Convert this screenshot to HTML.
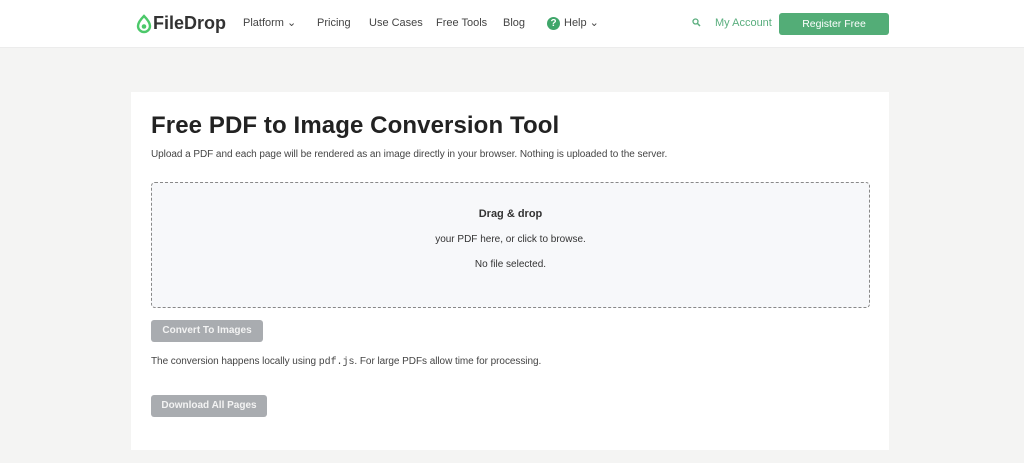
<!DOCTYPE html>
<html><head><meta charset="utf-8"><style>
*{box-sizing:border-box;margin:0;padding:0}
body{width:1024px;height:463px;overflow:hidden;background:#f4f4f3;font-family:"Liberation Sans",sans-serif;position:relative}
.hdr{position:absolute;left:0;top:0;width:1024px;height:48px;background:#fff;border-bottom:1px solid #ececec}
.nav{position:absolute;top:17px;font-size:11px;line-height:13px;color:#444}
.card{position:absolute;left:131px;top:92px;width:758px;height:358px;background:#fff}
h1{position:absolute;left:20px;top:20px;font-size:24px;font-weight:bold;color:#222;letter-spacing:0.1px}
.sub{position:absolute;left:20px;top:57px;font-size:10px;color:#444;letter-spacing:-0.05px}
.drop{position:absolute;left:20px;top:90px;width:719px;height:126px;border:1px dashed #888;border-radius:4px;background:#f7f8fa;text-align:center;font-size:10px;color:#333}
.btn{position:absolute;left:20px;height:22px;background:#a9acb0;color:#f3f3f3;font-size:10px;font-weight:bold;border-radius:3px;text-align:center;line-height:22px}
</style></head><body>
<div class="hdr">
<svg style="position:absolute;left:135px;top:14px" width="18" height="20" viewBox="0 0 18 20"><path d="M9 2 C5 6 3 9 3 12 a6 6 0 0 0 12 0 C15 9 13 6 9 2Z" fill="none" stroke="#4cc86a" stroke-width="2.4"/><circle cx="9" cy="12.5" r="2.3" fill="#4cc86a"/></svg>
<div style="position:absolute;left:153px;top:13px;font-size:18px;font-weight:bold;color:#333">FileDrop</div>
<div class="nav" style="left:243px">Platform ⌄</div>
<div class="nav" style="left:317px">Pricing</div>
<div class="nav" style="left:369px">Use Cases</div>
<div class="nav" style="left:436px">Free Tools</div>
<div class="nav" style="left:503px">Blog</div>
<div style="position:absolute;left:547px;top:17px;width:13px;height:13px;border-radius:50%;background:#3fa66a;color:#fff;font-size:10px;font-weight:bold;text-align:center;line-height:13px">?</div>
<div class="nav" style="left:564px">Help ⌄</div>
<svg style="position:absolute;left:692px;top:18px" width="9" height="9" viewBox="0 0 9 9"><circle cx="3.5" cy="3.5" r="2.5" fill="none" stroke="#5aae7e" stroke-width="1.3"/><path d="M5.5 5.5L8 8" stroke="#5aae7e" stroke-width="1.5"/></svg>
<div class="nav" style="left:715px;color:#5aae7e">My Account</div>
<div style="position:absolute;left:779px;top:13px;width:110px;height:22px;background:#53ad77;border-radius:3px;color:#fff;font-size:10.5px;text-align:center;line-height:22px">Register Free</div>
</div>
<div class="card">
<h1>Free PDF to Image Conversion Tool</h1>
<div class="sub">Upload a PDF and each page will be rendered as an image directly in your browser. Nothing is uploaded to the server.</div>
<div class="drop">
<div style="position:absolute;width:100%;top:25px;font-weight:bold;font-size:11px">Drag &amp; drop</div>
<div style="position:absolute;width:100%;top:51px">your PDF here, or click to browse.</div>
<div style="position:absolute;width:100%;top:76px">No file selected.</div>
</div>
<div class="btn" style="top:228px;width:112px">Convert To Images</div>
<div class="sub" style="top:264px">The conversion happens locally using <span style="font-family:'Liberation Mono',monospace">pdf.js</span>. For large PDFs allow time for processing.</div>
<div class="btn" style="top:303px;width:116px">Download All Pages</div>
</div>
</body></html>
